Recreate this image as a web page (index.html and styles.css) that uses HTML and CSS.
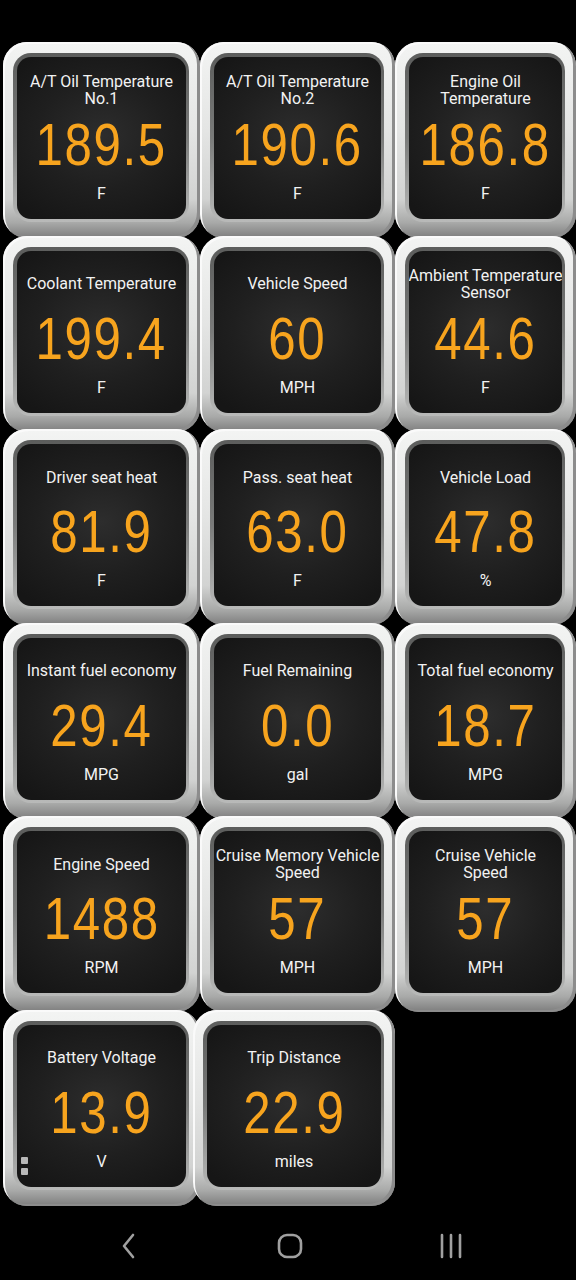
FILE: index.html
```
<!DOCTYPE html>
<html lang="en">
<head>
<meta charset="utf-8">
<title>Dashboard</title>
<link rel="stylesheet" href="styles.css">
</head>
<body>
<main class="dash">
  <div class="gauge"><div class="ring"><div class="panel"><div class="label"><span>A/T Oil Temperature</span><span>No.1</span></div><div class="value">189.5</div><div class="unit">F</div></div></div></div>
  <div class="gauge"><div class="ring"><div class="panel"><div class="label"><span>A/T Oil Temperature</span><span>No.2</span></div><div class="value">190.6</div><div class="unit">F</div></div></div></div>
  <div class="gauge"><div class="ring"><div class="panel"><div class="label"><span>Engine Oil</span><span>Temperature</span></div><div class="value">186.8</div><div class="unit">F</div></div></div></div>

  <div class="gauge"><div class="ring"><div class="panel"><div class="label"><span>Coolant Temperature</span></div><div class="value">199.4</div><div class="unit">F</div></div></div></div>
  <div class="gauge"><div class="ring"><div class="panel"><div class="label"><span>Vehicle Speed</span></div><div class="value">60</div><div class="unit">MPH</div></div></div></div>
  <div class="gauge"><div class="ring"><div class="panel"><div class="label"><span>Ambient Temperature</span><span>Sensor</span></div><div class="value">44.6</div><div class="unit">F</div></div></div></div>

  <div class="gauge"><div class="ring"><div class="panel"><div class="label"><span>Driver seat heat</span></div><div class="value">81.9</div><div class="unit">F</div></div></div></div>
  <div class="gauge"><div class="ring"><div class="panel"><div class="label"><span>Pass. seat heat</span></div><div class="value">63.0</div><div class="unit">F</div></div></div></div>
  <div class="gauge"><div class="ring"><div class="panel"><div class="label"><span>Vehicle Load</span></div><div class="value">47.8</div><div class="unit">%</div></div></div></div>

  <div class="gauge"><div class="ring"><div class="panel"><div class="label"><span>Instant fuel economy</span></div><div class="value">29.4</div><div class="unit">MPG</div></div></div></div>
  <div class="gauge"><div class="ring"><div class="panel"><div class="label"><span>Fuel Remaining</span></div><div class="value">0.0</div><div class="unit">gal</div></div></div></div>
  <div class="gauge"><div class="ring"><div class="panel"><div class="label"><span>Total fuel economy</span></div><div class="value">18.7</div><div class="unit">MPG</div></div></div></div>

  <div class="gauge"><div class="ring"><div class="panel"><div class="label"><span>Engine Speed</span></div><div class="value">1488</div><div class="unit">RPM</div></div></div></div>
  <div class="gauge"><div class="ring"><div class="panel"><div class="label"><span>Cruise Memory Vehicle</span><span>Speed</span></div><div class="value">57</div><div class="unit">MPH</div></div></div></div>
  <div class="gauge"><div class="ring"><div class="panel"><div class="label"><span>Cruise Vehicle</span><span>Speed</span></div><div class="value">57</div><div class="unit">MPH</div></div></div></div>

  <div class="gauge"><div class="ring"><div class="panel"><div class="label"><span>Battery Voltage</span></div><div class="value">13.9</div><div class="unit">V</div><span class="handle"><i></i><i></i></span></div></div></div>
  <div class="gauge shift-left"><div class="ring"><div class="panel"><div class="label"><span>Trip Distance</span></div><div class="value">22.9</div><div class="unit">miles</div></div></div></div>
</main>

<nav class="navbar">
  <svg class="nav-icon" width="24" height="28" viewBox="0 0 24 28"><path d="M15 3 L6 14 L15 25" fill="none" stroke="#a0a0a0" stroke-width="2.6" stroke-linecap="round" stroke-linejoin="round"/></svg>
  <svg class="nav-icon" width="28" height="28" viewBox="0 0 28 28"><rect x="3" y="3" width="22" height="22" rx="8" fill="none" stroke="#a0a0a0" stroke-width="2.6"/></svg>
  <svg class="nav-icon" width="26" height="28" viewBox="0 0 26 28"><path d="M4 3 V25 M13 3 V25 M22 3 V25" fill="none" stroke="#a0a0a0" stroke-width="2.6" stroke-linecap="round"/></svg>
</nav>
</body>
</html>
```

FILE: styles.css
```
html, body {
  margin: 0;
  padding: 0;
  background: #000;
}

body {
  width: 576px;
  height: 1280px;
  overflow: hidden;
  font-family: Roboto, "Noto Sans", "Liberation Sans", sans-serif;
  display: flex;
  flex-direction: column;
}

.dash {
  display: grid;
  grid-template-columns: 197px 195px 181px;
  grid-auto-rows: 193.5px;
  padding: 42px 0 0 3px;
  height: 1212px;
  box-sizing: border-box;
  flex: none;
}

.gauge {
  height: 196px;
  box-sizing: border-box;
  border-radius: 24px;
  padding: 11px 11px 16px 10px;
  background: linear-gradient(180deg, #f3f4f3 0%, #e4e5e4 45%, #d2d3d2 80%, #a9aaa9 92%, #7d7d7d 100%);
  box-shadow: inset -3px -2px 0 #8c8c8c, inset 2px 2px 0 #fafafa;
  position: relative;
}

.gauge.shift-left {
  margin-left: -7px;
}

.ring {
  height: 100%;
  box-sizing: border-box;
  border-radius: 18px;
  padding: 4px 3px 3px 4px;
  background: linear-gradient(180deg, #5c5d5c 0%, #7a7b7a 50%, #b9bab9 100%);
}

.panel {
  height: 100%;
  box-sizing: border-box;
  border-radius: 14px;
  background: radial-gradient(ellipse 70% 60% at 50% 48%, #2d2d2d 0%, #1f1f1f 55%, #161616 100%);
  overflow: hidden;
  display: flex;
  flex-direction: column;
  align-items: center;
  color: #f2f2f2;
  position: relative;
}

.label {
  margin-top: 13px;
  height: 40px;
  display: flex;
  flex-direction: column;
  align-items: center;
  justify-content: center;
  font-size: 16px;
  line-height: 17px;
  white-space: nowrap;
  text-align: center;
}

.value {
  margin-top: 8px;
  height: 54px;
  font-family: "Liberation Sans", Arial, sans-serif;
  font-size: 60px;
  line-height: 54px;
  color: #f7a41e;
  letter-spacing: 2px;
  transform: scaleX(0.82);
  white-space: nowrap;
}

.unit {
  margin-top: 12px;
  font-size: 16px;
  line-height: 20px;
}

.handle {
  position: absolute;
  left: 4px;
  bottom: 12px;
  display: flex;
  flex-direction: column;
  gap: 4px;
}

.handle i {
  display: block;
  width: 7px;
  height: 7px;
  border-radius: 1px;
  background: #b8b8b8;
}

.navbar {
  flex: 1;
  display: flex;
  justify-content: center;
  align-items: center;
  gap: 134px;
  padding-left: 6px;
}

.nav-icon {
  display: block;
}
```
